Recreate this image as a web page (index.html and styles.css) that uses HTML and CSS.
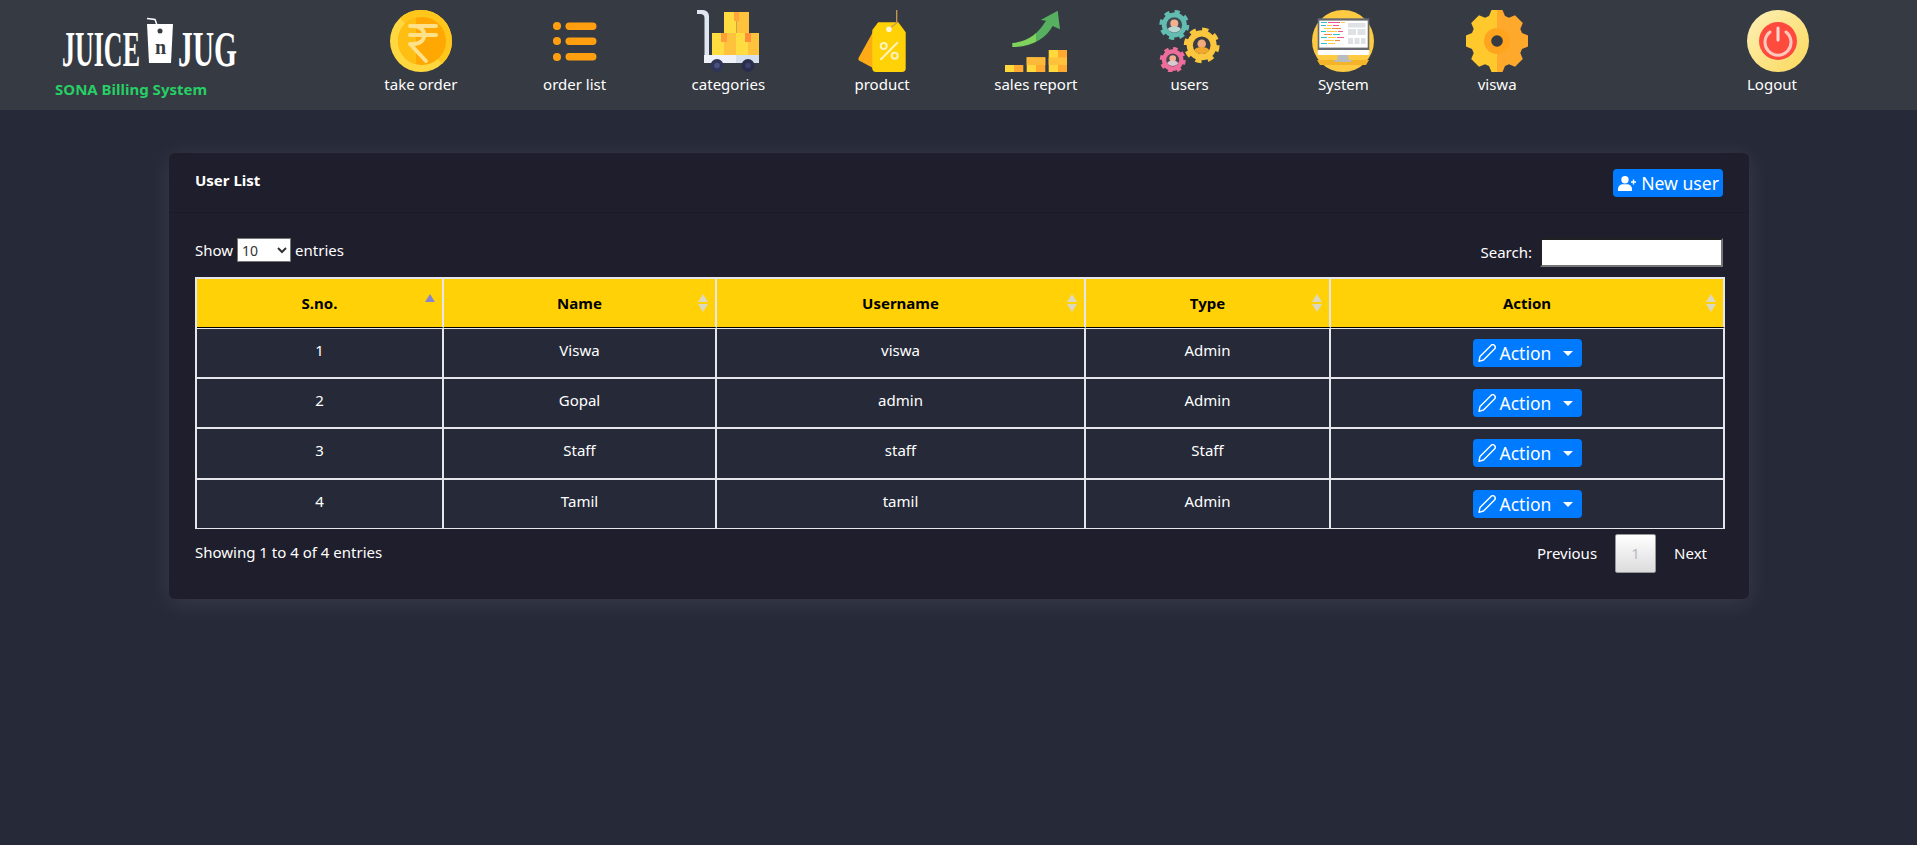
FILE: index.html
```html
<!DOCTYPE html>
<html lang="en">
<head>
<meta charset="utf-8">
<title>SONA Billing System</title>
<link rel="stylesheet" href="styles.css">
</head>
<body>
<svg class="defs" width="0" height="0" aria-hidden="true">
  <defs>
    <path id="gear" d="M-5.5-31H5.5L8-25 12-23.3 18-25.8 25.8-18 23.3-12 25-8 31-5.5V5.5L25 8 23.3 12 25.8 18 18 25.8 12 23.3 8 25 5.5 31H-5.5L-8 25-12 23.3-18 25.8-25.8 18-23.3 12-25 8-31 5.5V-5.5L-25-8-23.3-12-25.8-18-18-25.8-12-23.3-8-25Z"/>
    <path id="pencil" d="M13 1.500A2.400 2.400 0 0 1 16.500 5L5.500 16 1 17.300 2 12.500Z" fill="none" stroke="#fff" stroke-width="1.400" stroke-linejoin="round"/>
    <linearGradient id="halfGold" x1="0" x2="1" y1="0" y2="0">
      <stop offset="0.5" stop-color="#ffc82c"/><stop offset="0.5" stop-color="#ffa92c"/>
    </linearGradient>
    <linearGradient id="powerBg" x1="0" y1="0" x2="1" y2="1">
      <stop offset="0" stop-color="#fdf0b8"/><stop offset="1" stop-color="#fbd95a"/>
    </linearGradient>
    <linearGradient id="arrowGreen" x1="0" x2="1" y1="0" y2="0">
      <stop offset="0.5" stop-color="#7fd35c"/><stop offset="0.5" stop-color="#56b060"/>
    </linearGradient>
    <linearGradient id="barGold" x1="0" x2="1" y1="0" y2="0">
      <stop offset="0.5" stop-color="#ffd93b"/><stop offset="0.5" stop-color="#ffa930"/>
    </linearGradient>
  </defs>
</svg>

<header class="topbar">
  <div class="brand">
    <svg class="logo" viewBox="0 0 190 52" width="190" height="52">
      <text class="logo-text" transform="translate(7 50) scale(.52 1)">JUICE</text>
      <path d="M92 2.5 100 3.500 102 9" fill="none" stroke="#fff" stroke-width="1.500"/>
      <path d="M92 8H118L116 47H94Z" fill="#fff"/>
      <text class="logo-n" x="100" y="38">n</text>
      <circle cx="105" cy="15" r="2.500" fill="#363a42"/>
      <text class="logo-text" transform="translate(123 50) scale(.59 1)">JUG</text>
    </svg>
    <div class="brand-name">SONA Billing System</div>
  </div>
  <nav class="menu">
    <a class="menu-item" href="#">
      <svg class="menu-icon" viewBox="0 0 62 62">
        <circle cx="31" cy="31" r="31" fill="#ffd83f"/>
        <path d="M31 0A31 31 0 0 1 62 31 31 31 0 0 1 52 54L10 8A31 31 0 0 1 31 0Z" fill="#ffc61b"/>
        <circle cx="32" cy="31" r="24" fill="#ffa702"/>
        <path d="M8 31A24 24 0 0 1 26 8V54A24 24 0 0 1 8 31Z" fill="#ffbe12"/>
        <path d="M20 16H46M20 25H46M23 16C38 16 38 34 23 34H20L36 51" fill="none" stroke="#ffe18a" stroke-width="4" stroke-linecap="round" stroke-linejoin="round"/>
      </svg>
      <span class="menu-label">take order</span>
    </a>
    <a class="menu-item" href="#">
      <svg class="menu-icon" viewBox="0 0 62 62">
        <g fill="#ff9f10">
          <circle cx="13" cy="16" r="4"/><circle cx="13" cy="31" r="4"/><circle cx="13" cy="47" r="4"/>
          <rect x="21.500" y="12.500" width="31" height="7.500" rx="3.700"/>
          <rect x="21.500" y="27.500" width="31" height="7.500" rx="3.700"/>
          <rect x="21.500" y="43" width="31" height="7.500" rx="3.700"/>
        </g>
      </svg>
      <span class="menu-label">order list</span>
    </a>
    <a class="menu-item" href="#">
      <svg class="menu-icon" viewBox="0 0 62 62">
        <path d="M0 0H6A6 6 0 0 1 12 6V46H7.500V8A4 4 0 0 0 4 4H0Z" fill="#dfe6f1"/>
        <rect x="27" y="2" width="12.500" height="21" fill="#ffdd40"/>
        <rect x="39.500" y="2" width="12.500" height="21" fill="#ffc23c"/>
        <rect x="37" y="2" width="5" height="9" fill="#ffa53a"/>
        <rect x="15" y="23" width="12" height="22" fill="#ffdd40"/>
        <rect x="27" y="23" width="12" height="22" fill="#ffc23c"/>
        <rect x="39" y="23" width="12" height="22" fill="#ffdd40"/>
        <rect x="51" y="23" width="11" height="22" fill="#ffc23c"/>
        <rect x="24" y="23" width="6" height="9" fill="#ff9f3a"/>
        <rect x="48" y="23" width="6" height="9" fill="#ff8f3a"/>
        <rect x="7" y="45" width="32" height="8" fill="#eef2f8"/>
        <rect x="39" y="45" width="23" height="8" fill="#d6dfec"/>
        <circle cx="20" cy="55.500" r="6.500" fill="#2f3557"/><circle cx="20" cy="55.500" r="2.800" fill="#4a5280"/>
        <circle cx="51" cy="55.500" r="6.500" fill="#2a2e4c"/><circle cx="51" cy="55.500" r="2.800" fill="#3b4168"/>
      </svg>
      <span class="menu-label">categories</span>
    </a>
    <a class="menu-item" href="#">
      <svg class="menu-icon" viewBox="0 0 62 62">
        <path d="M27.300 12.300 7.800 47.500Q6.500 50 9 51L22 58Z" fill="#ffab16"/>
        <path d="M27.300 12.300H47.300L54.700 22.300V59A3.700 3.700 0 0 1 51 62H25A3.700 3.700 0 0 1 21.300 59V20Z" fill="#ffd107"/>
        <path d="M45.700 0V13L38 19" fill="none" stroke="#c99b50" stroke-width="1.300"/>
        <circle cx="38" cy="19.300" r="2.800" fill="#fff5d6"/>
        <path d="M30 49.300 46.300 32.700" stroke="#fff3b8" stroke-width="2" stroke-linecap="round"/>
        <circle cx="32.700" cy="36" r="3" fill="none" stroke="#fff3b8" stroke-width="2"/>
        <circle cx="43.700" cy="45.700" r="3" fill="none" stroke="#fff3b8" stroke-width="2"/>
      </svg>
      <span class="menu-label">product</span>
    </a>
    <a class="menu-item" href="#">
      <svg class="menu-icon" viewBox="0 0 62 62">
        <path d="M7.300 33C22 32 33 24 41 10.700L35.700 10 52.700 0.700 55 19.300 47.700 16C41 28 28 37 7.300 37Z" fill="url(#arrowGreen)"/>
        <rect x="0" y="55" width="18.300" height="7" fill="url(#barGold)"/>
        <rect x="21.700" y="47.300" width="18.600" height="14.700" fill="url(#barGold)"/>
        <rect x="21.700" y="47.300" width="18.600" height="7.700" fill="#ffb93a"/>
        <rect x="43.700" y="40" width="18.300" height="22" fill="url(#barGold)"/>
        <rect x="43.700" y="47.500" width="18.300" height="7.500" fill="#ffc23a"/>
      </svg>
      <span class="menu-label">sales report</span>
    </a>
    <a class="menu-item" href="#">
      <svg class="menu-icon" viewBox="0 0 62 62">
        <circle cx="15.300" cy="15" r="12.500" fill="#63bcb1"/>
        <circle cx="15.300" cy="15" r="13.200" fill="none" stroke="#63bcb1" stroke-width="3.600" stroke-dasharray="5.180"/>
        <circle cx="15.300" cy="15" r="7.800" fill="#3f4a52"/>
        <circle cx="15.300" cy="13.500" r="4" fill="#f2b08f"/>
        <path d="M8.800 19A7 4.500 0 0 1 21.800 19 7.800 7.800 0 0 1 8.800 19Z" fill="#b8d6d2"/>
        <circle cx="42.700" cy="35.300" r="15" fill="#fac73e"/>
        <circle cx="42.700" cy="35.300" r="15.800" fill="none" stroke="#fac73e" stroke-width="4.200" stroke-dasharray="6.200"/>
        <circle cx="42.700" cy="35.300" r="8.800" fill="#3b3f44"/>
        <circle cx="42.700" cy="33.800" r="4.300" fill="#f2aa7e"/>
        <path d="M35.200 40A8 4.500 0 0 1 50.200 40 8.800 8.800 0 0 1 35.200 40Z" fill="#f0a92c"/>
        <circle cx="13.700" cy="50" r="10.800" fill="#ef6d9b"/>
        <circle cx="13.700" cy="50" r="11.400" fill="none" stroke="#ef6d9b" stroke-width="3.200" stroke-dasharray="4.480"/>
        <circle cx="13.700" cy="50" r="6.500" fill="#4a4350"/>
        <circle cx="13.700" cy="48.500" r="3.300" fill="#f2b08f"/>
        <path d="M8.200 53A5.800 3.800 0 0 1 19.200 53 6.500 6.500 0 0 1 8.200 53Z" fill="#d9c8d0"/>
      </svg>
      <span class="menu-label">users</span>
    </a>
    <a class="menu-item" href="#">
      <svg class="menu-icon" viewBox="0 0 62 62">
        <circle cx="31" cy="31" r="31" fill="#fdca41"/>
        <path d="M5 50H57L54 55H8Z" fill="#f3b429"/>
        <rect x="5.700" y="8.300" width="51.600" height="32" fill="#666a70"/>
        <rect x="7.300" y="10.600" width="48.400" height="27" fill="#fff"/>
        <g fill="#dfe2e4">
          <rect x="36" y="13" width="17.500" height="4.500"/>
          <rect x="36" y="19" width="8" height="6"/><rect x="45.500" y="19" width="8" height="6"/>
          <rect x="36" y="28" width="5" height="6"/><rect x="42.500" y="28" width="5" height="6"/><rect x="49" y="28" width="4.500" height="6"/>
        </g>
        <g>
          <rect x="9" y="12" width="6" height="1" fill="#2ec4c4"/><rect x="16" y="12" width="12" height="1" fill="#f2578c"/><rect x="29" y="12" width="4" height="1" fill="#fdca41"/>
          <rect x="9" y="15" width="5" height="1" fill="#2ec4c4"/><rect x="15" y="15" width="5" height="1" fill="#fdca41"/><rect x="21" y="15" width="6" height="1" fill="#f2578c"/>
          <rect x="12" y="18" width="7" height="1" fill="#fdca41"/><rect x="20" y="18" width="9" height="1" fill="#f28c3c"/>
          <rect x="9" y="21" width="5" height="1" fill="#2ec4c4"/><rect x="15" y="21" width="10" height="1" fill="#fdca41"/><rect x="26" y="21" width="5" height="1" fill="#f2578c"/>
          <rect x="12" y="24" width="8" height="1" fill="#f28c3c"/><rect x="21" y="24" width="7" height="1" fill="#2ec4c4"/>
          <rect x="9" y="27" width="6" height="1" fill="#2ec4c4"/><rect x="16" y="27" width="8" height="1" fill="#fdca41"/><rect x="25" y="27" width="7" height="1" fill="#f2578c"/>
          <rect x="12" y="30" width="10" height="1" fill="#fdca41"/><rect x="23" y="30" width="5" height="1" fill="#f28c3c"/>
          <rect x="9" y="33" width="6" height="1" fill="#2ec4c4"/><rect x="16" y="33" width="7" height="1" fill="#fdca41"/>
        </g>
        <rect x="5.700" y="40" width="51.600" height="5" rx="1" fill="#fff"/>
        <path d="M26 45H36L37 50H39.500V52H22.500V50H25Z" fill="#b9bcbf"/>
      </svg>
      <span class="menu-label">System</span>
    </a>
    <a class="menu-item" href="#">
      <svg class="menu-icon" viewBox="-31 -31 62 62">
        <use href="#gear" fill="url(#halfGold)"/>
        <circle r="13" fill="#ffa41f"/>
        <circle r="5.800" fill="#363a42"/>
      </svg>
      <span class="menu-label">viswa</span>
    </a>
  </nav>
  <a class="logout" href="#">
    <svg class="menu-icon" viewBox="0 0 62 62">
      <circle cx="31" cy="31" r="31" fill="url(#powerBg)"/>
      <circle cx="31" cy="31" r="19" fill="#ff4b3e"/>
      <path d="M23 22A13 13 0 1 0 39 22" fill="none" stroke="#ffc9c0" stroke-width="3" stroke-linecap="round"/>
      <path d="M31 18V30" stroke="#ffd9d2" stroke-width="3" stroke-linecap="round"/>
    </svg>
    <span class="menu-label">Logout</span>
  </a>
</header>

<main class="page">
  <section class="card">
    <div class="card-head">
      <h1 class="card-title">User List</h1>
      <button class="btn btn-new" type="button">
        <svg class="btn-icon user-plus" viewBox="0 0 19 15"><circle cx="7" cy="3.700" r="3.700" fill="#fff"/><path d="M0 15V13C0 10 2.500 8.300 5 8.300H9C11.500 8.300 14 10 14 13V15Z" fill="#fff"/><path d="M15.500 3.500V8.500M13 6H18" stroke="#fff" stroke-width="1.400"/></svg>
        New user
      </button>
    </div>
    <div class="card-body">
      <div class="controls">
        <label class="length">Show
          <select class="length-select"><option>10</option><option>25</option><option>50</option><option>100</option></select>
          entries</label>
        <label class="search">Search:
          <input class="search-input" type="search">
        </label>
      </div>
      <table class="users">
        <colgroup><col class="c1"><col class="c2"><col class="c3"><col class="c4"><col class="c5"></colgroup>
        <thead>
          <tr>
            <th class="sort-asc">S.no.</th><th class="sortable">Name</th><th class="sortable">Username</th><th class="sortable">Type</th><th class="sortable">Action</th>
          </tr>
        </thead>
        <tbody>
          <tr><td>1</td><td>Viswa</td><td>viswa</td><td>Admin</td><td><button class="btn btn-action" type="button"><svg class="btn-icon pencil" viewBox="0 0 18 18"><use href="#pencil"/></svg>Action<span class="caret"></span></button></td></tr>
          <tr><td>2</td><td>Gopal</td><td>admin</td><td>Admin</td><td><button class="btn btn-action" type="button"><svg class="btn-icon pencil" viewBox="0 0 18 18"><use href="#pencil"/></svg>Action<span class="caret"></span></button></td></tr>
          <tr class="tall"><td>3</td><td>Staff</td><td>staff</td><td>Staff</td><td><button class="btn btn-action" type="button"><svg class="btn-icon pencil" viewBox="0 0 18 18"><use href="#pencil"/></svg>Action<span class="caret"></span></button></td></tr>
          <tr><td>4</td><td>Tamil</td><td>tamil</td><td>Admin</td><td><button class="btn btn-action" type="button"><svg class="btn-icon pencil" viewBox="0 0 18 18"><use href="#pencil"/></svg>Action<span class="caret"></span></button></td></tr>
        </tbody>
      </table>
      <div class="table-foot">
        <div class="info">Showing 1 to 4 of 4 entries</div>
        <div class="pager">
          <a class="pager-link" href="#">Previous</a>
          <a class="pager-link pager-current" href="#">1</a>
          <a class="pager-link" href="#">Next</a>
        </div>
      </div>
    </div>
  </section>
</main>
</body>
</html>
```

FILE: styles.css
```css
* { box-sizing: border-box; }
html, body { margin: 0; height: 100%; }
body {
  background: #262a38;
  color: #fff;
  font-family: "Noto Sans", "Open Sans", sans-serif;
  font-size: 15px;
  line-height: 21px;
  overflow: hidden;
}
.defs { position: absolute; }

.topbar {
  display: flex;
  height: 110px;
  background: #363a42;
}
.brand { width: 344px; flex: none; padding: 16px 0 0 55px; }
.logo { display: block; overflow: visible; }
.logo-text {
  font-family: "Liberation Serif", serif;
  font-size: 50px;
  font-weight: 700;
  fill: #fff;
}
.logo-n {
  font-family: "Liberation Serif", serif;
  font-size: 20px;
  font-weight: 700;
  fill: #363a42;
}
.brand-name {
  margin-top: 11px;
  color: #27ce66;
  font-weight: 700;
  font-size: 15px;
  line-height: 20px;
  white-space: nowrap;
}
.menu { display: flex; flex: none; }
.menu-item {
  width: 153.75px;
  padding-top: 10px;
  color: #fff;
  text-decoration: none;
  text-align: center;
}
.menu-icon { display: block; width: 62px; height: 62px; margin: 0 auto; }
.menu-label { display: block; line-height: 24px; white-space: nowrap; }
.logout {
  margin-left: auto;
  margin-right: 108px;
  width: 62px;
  padding-top: 10px;
  color: #fff;
  text-decoration: none;
}

.page { padding: 43px 168px 0 169px; }
.card {
  background: #1f1e2c;
  border-radius: 6px;
  box-shadow: 0 4px 24px rgba(255, 255, 255, .09);
}
.card-head {
  display: flex;
  justify-content: space-between;
  align-items: flex-start;
  height: 60px;
  padding: 16px 26px 0;
  border-bottom: 1px solid #1b1a27;
}
.card-title { margin: 1px 0 0; font-size: 15px; line-height: 21px; font-weight: 700; }
.btn {
  display: inline-flex;
  align-items: center;
  vertical-align: top;
  height: 28px;
  padding: 0 4px;
  border: 0;
  border-radius: 4px;
  background: #007bff;
  color: #fff;
  font: 400 17.5px/28px "Noto Sans", "Open Sans", sans-serif;
  white-space: nowrap;
}
.btn-new { padding-left: 5px; font-size: 17.6px; }
.user-plus { width: 19px; height: 15px; margin-right: 4px; }
.pencil { width: 18px; height: 18px; margin-right: 4px; }
.btn-action { width: 109px; padding: 0 5px; }
.caret {
  width: 0;
  height: 0;
  margin-left: 12px;
  border-style: solid;
  border-width: 5px 5px 0;
  border-color: #fff transparent transparent;
}

.card-body { padding: 25px 26px 26px; }
.controls {
  display: flex;
  justify-content: space-between;
  align-items: flex-start;
  height: 39px;
}
.length, .search { display: flex; align-items: center; white-space: nowrap; }
.length-select {
  width: 54px;
  height: 24px;
  margin: 0 4px;
  background: #fff;
  color: #333;
  font: 14px "Noto Sans", "Open Sans", sans-serif;
}
.search-input {
  width: 183px;
  height: 29px;
  margin-left: 8px;
  background: #fff;
  border: 2px inset #767676;
}

.users {
  width: 100%;
  table-layout: fixed;
  border-collapse: separate;
  border-spacing: 0;
  border-top: 2px solid #e4e6ec;
  border-left: 2px solid #e4e6ec;
}
.c1 { width: 247px; } .c2 { width: 273px; } .c3 { width: 369px; } .c4 { width: 245px; } .c5 { width: 394px; }
.users th {
  position: relative;
  height: 49px;
  background: #ffd106;
  color: #000;
  font-weight: 700;
  text-align: center;
  vertical-align: middle;
  padding: 0;
  border-right: 2px solid #e4e6ec;
  border-bottom: 1px solid #000;
}
.users td {
  height: 50px;
  padding: 10px 0 0;
  background: #262a38;
  line-height: 23px;
  text-align: center;
  vertical-align: top;
  border-right: 2px solid #e4e6ec;
  border-bottom: 2px solid #e4e6ec;
}
.users tbody tr:first-child td { height: 51px; border-top: 1px solid #e4e6ec; }
.users tbody tr.tall td { height: 51px; }
.users tbody tr:last-child td { height: 49px; border-bottom-width: 1px; }

.sort-asc::before, .sortable::before, .sortable::after {
  content: "";
  position: absolute;
  right: 7px;
  width: 0;
  height: 0;
  border-style: solid;
  border-width: 0 5px 8px;
  border-color: transparent transparent #dcd9c0;
}
.sort-asc::before, .sortable::before { top: 15px; }
.sort-asc::before { border-bottom-color: #8585d6; }
.sortable::after { top: 25px; border-width: 8px 5px 0; border-color: #dcd9c0 transparent transparent; }

.table-foot {
  display: flex;
  justify-content: space-between;
  align-items: center;
  padding-top: 5px;
}
.info { margin-top: -2px; }
.pager { display: flex; align-items: center; height: 39px; }
.pager-link { padding: 0 16px; margin-left: 2px; color: #fff; text-decoration: none; line-height: 39px; }
.pager-current {
  width: 41px;
  height: 39px;
  padding: 0;
  text-align: center;
  line-height: 37px;
  color: #b9b9c4;
  border: 1px solid #979797;
  border-radius: 2px;
  background: linear-gradient(#fff, #dcdcdc);
}
```
